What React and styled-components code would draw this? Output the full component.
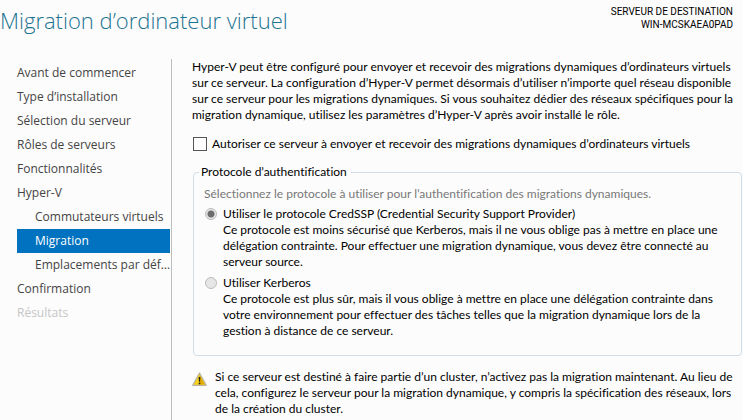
import React, { useState } from "react";
import styled, { createGlobalStyle } from "styled-components";

const GlobalStyle = createGlobalStyle`
  *, *::before, *::after { box-sizing: border-box; }
  html, body { margin: 0; background: #fcfcfc; }
  body {
    color: #000;
    font: 12px/16px Lato, "Open Sans", sans-serif;
    font-variant-ligatures: none;
    overflow: hidden;
  }
`;

const Page = styled.div`
  display: flex;
  flex-direction: column;
  min-height: 100vh;
`;

const Header = styled.header`
  display: flex;
  justify-content: space-between;
  align-items: flex-start;
  height: 59px;
  padding: 5px 10px 0 0;
`;

const Title = styled.h1`
  margin: 0;
  color: #1c7391;
  font-family: "Open Sans", sans-serif;
  font-size: 22px;
  font-weight: 300;
  line-height: 30px;
  white-space: nowrap;
`;

const Destination = styled.div`
  font-family: Roboto, sans-serif;
  font-size: 10px;
  line-height: 13px;
  text-align: right;
  white-space: nowrap;
`;

const Body = styled.div`
  display: flex;
  flex: 1;
`;

const Sidebar = styled.nav`
  flex: 0 0 172px;
  min-width: 0;
  padding: 2px 1px 0 17px;
  border-right: 1px solid #bdbdbd;
`;

const Steps = styled.ul`
  margin: 0;
  padding: 0;
  list-style: none;
`;

const StepLink = styled.a`
  display: block;
  padding-left: ${({ $nested }) => ($nested ? 18 : 0)}px;
  background: ${({ $active }) => ($active ? "#0072c0" : "transparent")};
  color: ${({ $active, $disabled }) => ($active ? "#fff" : $disabled ? "#c6c6c6" : "#444")};
  font-family: "Open Sans", sans-serif;
  font-size: 12px;
  line-height: 24px;
  text-decoration: none;
  white-space: nowrap;
`;

const Main = styled.main`
  flex: 1;
  min-width: 0;
  padding: 0 0 0 20px;
  white-space: nowrap;
`;

const Paragraph = styled.p`
  margin: 0;
`;

const CheckRow = styled.label`
  display: flex;
  align-items: center;
  gap: 5px;
  margin: 13px 0 12px 1px;
`;

const Checkbox = styled.input`
  appearance: none;
  width: 14px;
  height: 14px;
  margin: 0;
  border: 1px solid #555;
  background: #fff;
  &:checked { box-shadow: inset 0 0 0 2px #fff; background: #333; }
`;

const Group = styled.fieldset`
  min-width: 0;
  margin: 0 1px;
  padding: 6px 8px 11px 10px;
  border: 1px solid #d0dde6;
  border-radius: 4px;
`;

const Legend = styled.legend`
  margin-left: -5px;
  padding: 0 4px 0 2px;
`;

const Hint = styled.p`
  margin: 0 0 4px;
  color: #787878;
`;

const Option = styled.label`
  display: flex;
  align-items: flex-start;
  gap: 6px;
  margin: 0 0 5px 1px;
`;

const Radio = styled.input`
  appearance: none;
  flex: none;
  width: 12px;
  height: 12px;
  margin: 2px 0 0;
  border: 1px solid #bcbcbc;
  border-radius: 50%;
  background: #e6e6e6;
  &:checked { background: radial-gradient(circle, #6c6c6c 0 3px, #e6e6e6 4px); }
`;

const Warning = styled.div`
  display: flex;
  align-items: flex-start;
  gap: 8px;
  margin-top: 13px;
`;

const WarningIcon = styled.svg`
  flex: none;
  width: 15px;
  height: 15px;
  margin-top: 3px;
`;

const steps = [
  { label: "Avant de commencer" },
  { label: "Type d’installation" },
  { label: "Sélection du serveur" },
  { label: "Rôles de serveurs" },
  { label: "Fonctionnalités" },
  { label: "Hyper-V" },
  { label: "Commutateurs virtuels", nested: true },
  { label: "Migration", nested: true, active: true },
  { label: "Emplacements par déf…", nested: true },
  { label: "Confirmation" },
  { label: "Résultats", disabled: true },
];

export default function App() {
  const [allowed, setAllowed] = useState(false);

  return (
    <Page>
      <GlobalStyle />
      <Header>
        <Title>Migration d’ordinateur virtuel</Title>
        <Destination>
          SERVEUR DE DESTINATION
          <br />
          WIN-MCSKAEA0PAD
        </Destination>
      </Header>
      <Body>
        <Sidebar aria-label="Étapes">
          <Steps>
            {steps.map(({ label, nested, active, disabled }) => (
              <li key={label}>
                <StepLink
                  href="#"
                  $nested={nested}
                  $active={active}
                  $disabled={disabled}
                  aria-current={active ? "step" : undefined}
                  aria-disabled={disabled}
                >
                  {label}
                </StepLink>
              </li>
            ))}
          </Steps>
        </Sidebar>
        <Main>
          <Paragraph>
            Hyper-V peut être configuré pour envoyer et recevoir des migrations dynamiques d’ordinateurs virtuels
            <br />
            sur ce serveur. La configuration d’Hyper-V permet désormais d’utiliser n’importe quel réseau disponible
            <br />
            sur ce serveur pour les migrations dynamiques. Si vous souhaitez dédier des réseaux spécifiques pour la
            <br />
            migration dynamique, utilisez les paramètres d’Hyper-V après avoir installé le rôle.
          </Paragraph>
          <CheckRow>
            <Checkbox type="checkbox" checked={allowed} onChange={(e) => setAllowed(e.target.checked)} />
            Autoriser ce serveur à envoyer et recevoir des migrations dynamiques d’ordinateurs virtuels
          </CheckRow>
          <Group>
            <Legend>Protocole d’authentification</Legend>
            <Hint>Sélectionnez le protocole à utiliser pour l’authentification des migrations dynamiques.</Hint>
            <Option>
              <Radio type="radio" name="protocol" defaultChecked disabled={!allowed} />
              <span>
                Utiliser le protocole CredSSP (Credential Security Support Provider)
                <br />
                Ce protocole est moins sécurisé que Kerberos, mais il ne vous oblige pas à mettre en place une
                <br />
                délégation contrainte. Pour effectuer une migration dynamique, vous devez être connecté au
                <br />
                serveur source.
              </span>
            </Option>
            <Option>
              <Radio type="radio" name="protocol" disabled={!allowed} />
              <span>
                Utiliser Kerberos
                <br />
                Ce protocole est plus sûr, mais il vous oblige à mettre en place une délégation contrainte dans
                <br />
                votre environnement pour effectuer des tâches telles que la migration dynamique lors de la
                <br />
                gestion à distance de ce serveur.
              </span>
            </Option>
          </Group>
          <Warning>
            <WarningIcon viewBox="0 0 15 15" aria-hidden="true">
              <path d="M7.5 1 14.3 13.3H.7Z" fill="#f8d21c" stroke="#b5b3a6" strokeWidth="1.2" strokeLinejoin="round" />
              <path d="M7.5 3 12.7 12.5H7.5Z" fill="#e3a900" />
              <path d="M6.6 5h1.8L8 9.8H7Z" fill="#222" />
              <circle cx="7.5" cy="11.4" r="0.9" fill="#222" />
            </WarningIcon>
            <Paragraph>
              Si ce serveur est destiné à faire partie d’un cluster, n’activez pas la migration maintenant. Au lieu de
              <br />
              cela, configurez le serveur pour la migration dynamique, y compris la spécification des réseaux, lors
              <br />
              de la création du cluster.
            </Paragraph>
          </Warning>
        </Main>
      </Body>
    </Page>
  );
}
